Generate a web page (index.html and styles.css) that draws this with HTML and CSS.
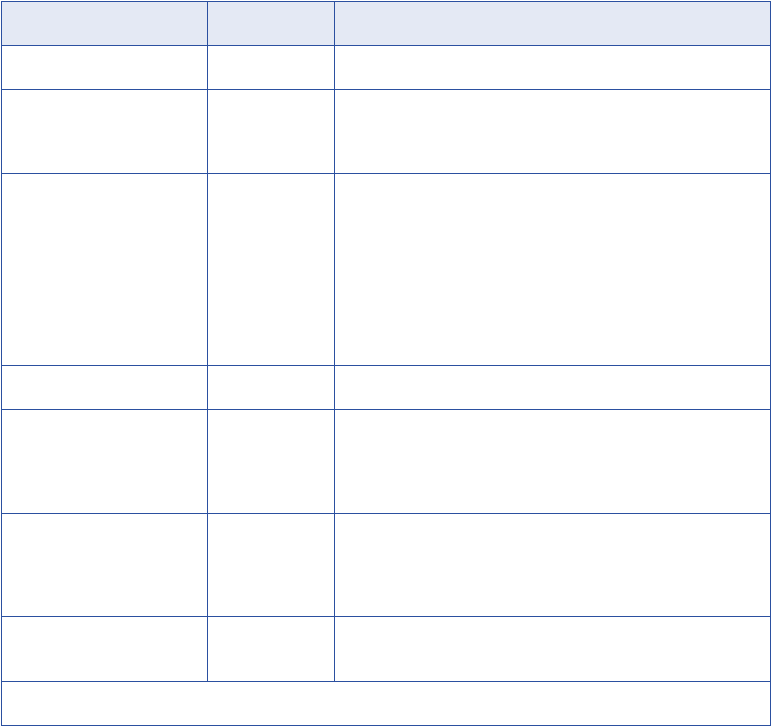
FILE: index.html
```html
<!DOCTYPE html>
<html lang="en">
<head>
<meta charset="utf-8">
<title>Table</title>
<link rel="stylesheet" href="styles.css">
</head>
<body>
<div class="table">
  <div class="cell head"></div><div class="cell head"></div><div class="cell head"></div>
  <div class="cell r1"></div><div class="cell r1"></div><div class="cell r1"></div>
  <div class="cell r2"></div><div class="cell r2"></div><div class="cell r2"></div>
  <div class="cell r3"></div><div class="cell r3"></div><div class="cell r3"></div>
  <div class="cell r4"></div><div class="cell r4"></div><div class="cell r4"></div>
  <div class="cell r5"></div><div class="cell r5"></div><div class="cell r5"></div>
  <div class="cell r6"></div><div class="cell r6"></div><div class="cell r6"></div>
  <div class="cell r7"></div><div class="cell r7"></div><div class="cell r7"></div>
  <div class="cell foot"></div>
</div>
</body>
</html>
```

FILE: styles.css
```css
html, body {
  margin: 0;
  padding: 0;
  background: #ffffff;
  font-family: "Liberation Sans", Arial, sans-serif;
}
body {
  padding: 1px 0 0 1px;
}
.table {
  display: grid;
  grid-template-columns: 205px 126px 435px;
  grid-template-rows: 43px 43px 83px 191px 43px 103px 102px 64px 43px;
  gap: 1px;
  padding: 1px;
  width: 770px;
  box-sizing: border-box;
  background: #2b50a0;
}
.cell {
  background: #ffffff;
}
.cell.head {
  background: #e4e9f4;
}
.cell.foot {
  grid-column: 1 / -1;
}
```
